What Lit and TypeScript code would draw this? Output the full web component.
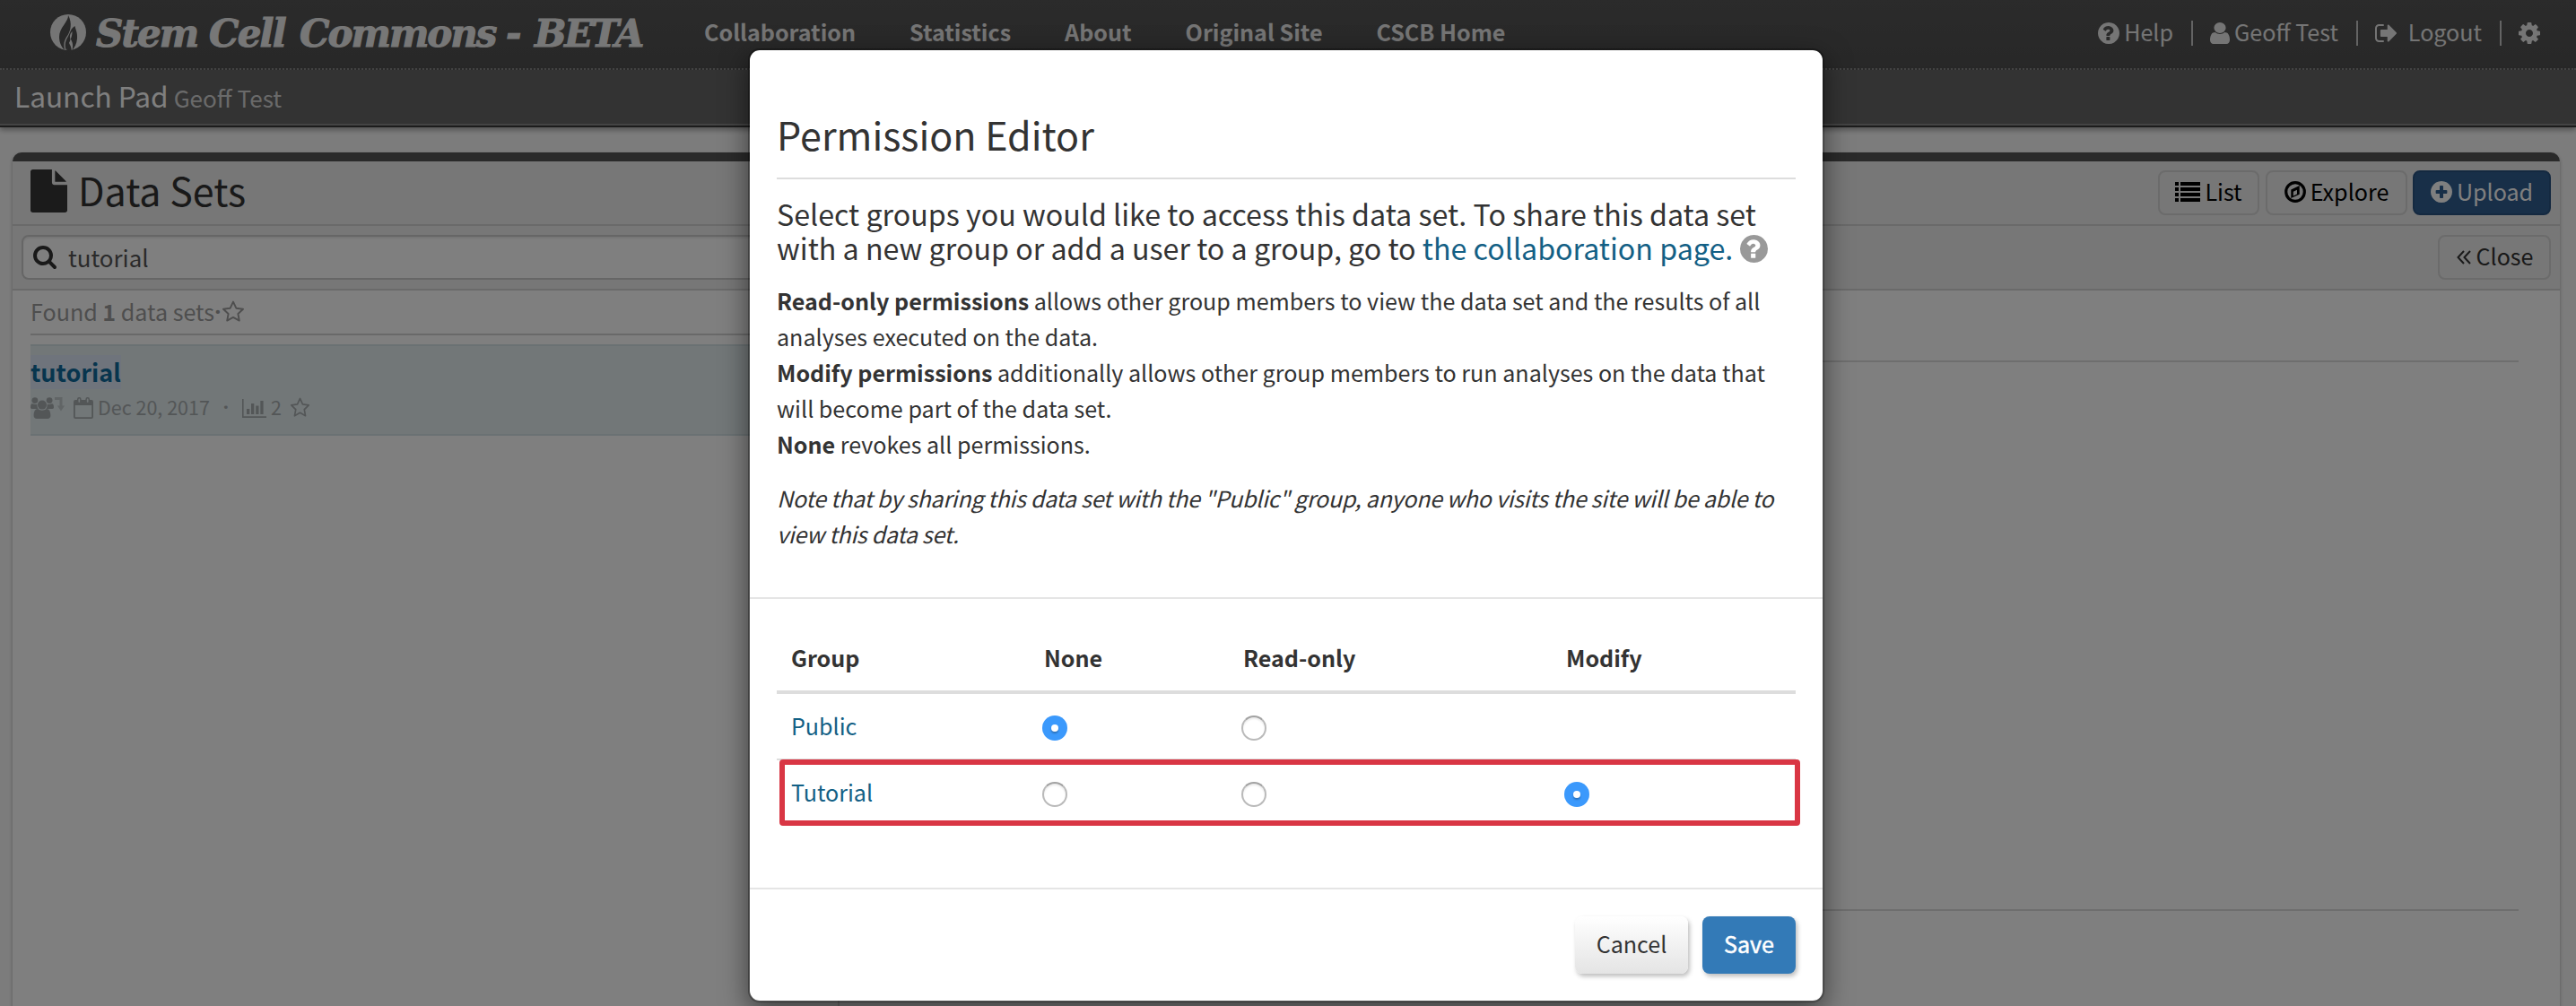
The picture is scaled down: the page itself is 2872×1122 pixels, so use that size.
import { LitElement, html, css, svg } from "lit";
import { customElement, property } from "lit/decorators.js";
import { classMap } from "lit/directives/class-map.js";

/** name -> [viewBox, shapes] */
const ICONS: Record<string, [string, unknown]> = {
  file: [
    "128 0 1536 1792",
    svg`<path d="M1152 512v-472q22 14 36 28l408 408q14 14 28 36h-472zm-128 32q0 40 28 68t68 28h544v1056q0 40-28 68t-68 28h-1344q-40 0-68-28t-28-68v-1600q0-40 28-68t68-28h800v544z"/>`,
  ],
  search: [
    "64 128 1664 1664",
    svg`<path d="M1216 832q0-185-131.500-316.500t-316.500-131.500-316.500 131.500-131.500 316.500 131.500 316.500 316.500 131.500 316.500-131.500 131.500-316.500zm512 832q0 52-38 90t-90 38q-54 0-90-38l-343-342q-179 124-399 124-143 0-273.500-55.500t-225-150-150-225-55.500-273.500 55.500-273.500 150-225 225-150 273.500-55.500 273.500 55.500 225 150 150 225 55.500 273.500q0 220-124 399l343 343q37 37 37 90z"/>`,
  ],
  question: [
    "128 128 1536 1536",
    svg`<path fill-rule="evenodd" transform="translate(-40 0)" d="M1024 1376v-192q0-14-9-23t-23-9h-192q-14 0-23 9t-9 23v192q0 14 9 23t23 9h192q14 0 23-9t9-23zm256-672q0-88-55.500-163t-138.500-116-170-41q-243 0-371 213-15 24 8 42l132 100q7 6 19 6 16 0 25-12 53-68 86-92 34-24 86-24 48 0 85.500 26t37.500 59q0 38-20 61t-68 45q-63 28-115.500 86.500t-52.500 125.500v36q0 14 9 23t23 9h192q14 0 23-9t9-23q0-19 21.500-49.500t54.500-49.500q32-18 49-28.500t46-35 44.500-48 28-60.500 12.500-81z M1704 896q0 209-103 385.500t-279.500 279.500-385.500 103-385.500-103-279.500-279.500-103-385.500 103-385.500 279.500-279.500 385.500-103 385.500 103 279.500 279.500 103 385.500z"/>`,
  ],
  user: [
    "256 128 1280 1536",
    svg`<path d="M1536 1399q0 109-62.500 187t-150.500 78h-854q-88 0-150.500-78t-62.500-187q0-85 8.500-160.500t31.500-152 58.500-131 94-89 134.500-34.500q131 128 313 128t313-128q76 0 134.500 34.500t94 89 58.500 131 31.500 152 8.500 160.500zm-256-887q0 159-112.500 271.500t-271.500 112.500-271.500-112.500-112.500-271.500 112.500-271.500 271.500-112.500 271.500 112.500 112.500 271.500z"/>`,
  ],
  logout: [
    "64 256 1568 1280",
    svg`<path d="M704 1440q0 4 1 20t.5 26.500-3 23.500-10 19.500-20.500 6.500h-320q-119 0-203.500-84.500t-84.500-203.500v-704q0-119 84.500-203.500t203.500-84.500h320q13 0 22.500 9.500t9.500 22.500q0 4 1 20t.5 26.500-3 23.500-10 19.500-20.500 6.500h-320q-66 0-113 47t-47 113v704q0 66 47 113t113 47h312l11.500 1 11.500 3 8 5.500 7 9 2 13.500zm928-544q0 26-19 45l-544 544q-19 19-45 19t-45-19-19-45v-288h-448q-26 0-45-19t-19-45v-384q0-26 19-45t45-19h448v-288q0-26 19-45t45-19 45 19l544 544q19 19 19 45z"/>`,
  ],
  cog: [
    "128 128 1536 1536",
    svg`<path d="M1152 896q0-106-75-181t-181-75-181 75-75 181 75 181 181 75 181-75 75-181zm512-109v222q0 12-8 23t-20 13l-185 28q-19 54-39 91 35 50 107 138 10 12 10 25t-9 23q-27 37-99 108t-94 71q-12 0-26-9l-138-108q-44 23-91 38-16 136-29 186-7 28-36 28h-222q-14 0-24.500-8.500t-11.500-21.500l-28-184q-49-16-90-37l-141 107q-10 9-25 9-14 0-25-11-126-114-165-168-7-10-7-23 0-12 8-23 15-21 51-66.500t54-70.500q-27-50-41-99l-183-27q-13-2-21-12.500t-8-23.500v-222q0-12 8-23t19-13l186-28q14-46 39-92-40-57-107-138-10-12-10-24 0-10 9-23 26-36 98.500-107.500t94.500-71.500q13 0 26 10l138 107q44-23 91-38 16-136 29-186 7-28 36-28h222q14 0 24.500 8.500t11.500 21.500l28 184q49 16 90 37l142-107q9-9 24-9 13 0 25 10 129 119 165 170 7 8 7 22 0 12-8 23-15 21-51 66.500t-54 70.500q26 50 41 98l183 28q13 2 21 12.500t8 23.500z"/>`,
  ],
  plus: [
    "128 128 1536 1536",
    svg`<path fill-rule="evenodd" transform="translate(-40 0)" d="M1344 960v-128q0-26-19-45t-45-19h-216v-256q0-26-19-45t-45-19h-128q-26 0-45 19t-19 45v256h-216q-26 0-45 19t-19 45v128q0 26 19 45t45 19h216v256q0 26 19 45t45 19h128q26 0 45-19t19-45v-256h216q26 0 45-19t19-45z M1704 896q0 209-103 385.500t-279.500 279.500-385.500 103-385.500-103-279.500-279.500-103-385.500 103-385.500 279.500-279.500 385.500-103 385.500 103 279.500 279.500 103 385.500z"/>`,
  ],
  compass: [
    "0 0 24 24",
    svg`<circle cx="12" cy="12" r="10.300" fill="none" stroke="currentColor" stroke-width="3.200"/><path fill-rule="evenodd" d="M16.700 5v9.800L7.300 19V9.600zM14 9.800l-4.200 2v4.600l4.200-2z"/>`,
  ],
  list: [
    "0 0 28 22",
    svg`<path d="M0 0h4v4H0zM6 0h22v4H6zM0 6h4v4H0zM6 6h22v4H6zM0 12h4v4H0zM6 12h22v4H6zM0 18h4v4H0zM6 18h22v4H6z"/>`,
  ],
  angles: [
    "0 0 16 16",
    svg`<path d="M8 1L1.500 8L8 15M15 1L8.500 8L15 15" fill="none" stroke="currentColor" stroke-width="2"/>`,
  ],
  star: [
    "0 0 26 24",
    svg`<path d="M13 1.600L16.300 8.700L24 9.700L18.400 15L19.800 22.600L13 18.900L6.200 22.600L7.600 15L2 9.700L9.700 8.700Z" fill="none" stroke="currentColor" stroke-width="1.900" stroke-linejoin="round"/>`,
  ],
  group: [
    "0 0 26 24",
    svg`<circle cx="4.900" cy="3.600" r="3.400"/><circle cx="21.100" cy="3.600" r="3.400"/><path d="M0 11.500C0 8.500.8 7.200 2 7.200C4.500 8.200 6 8 7.400 7.700C7.200 10 7.800 11.600 8.700 13H3C1 13 0 12.600 0 11.500ZM26 11.500C26 8.500 25.200 7.200 24 7.200C21.500 8.200 20 8 18.600 7.700C18.800 10 18.200 11.600 17.300 13H23C25 13 26 12.600 26 11.500Z"/><circle cx="13" cy="8.600" r="5"/><path d="M8.300 13C10.500 15.200 15.500 15.200 17.700 13C21 13 22.400 16 22.400 20.500C22.400 22.700 21 24 19.200 24H6.800C5 24 3.600 22.700 3.600 20.500C3.600 16 5 13 8.300 13Z"/>`,
  ],
  inherit: [
    "0 0 11 16",
    svg`<path d="M0 0H8.500V9.500H11L7 15.500L3 9.500H5.500V3H0Z"/>`,
  ],
  calendar: [
    "0 0 22 24",
    svg`<path fill-rule="evenodd" d="M2 3H20Q22 3 22 5V22Q22 24 20 24H2Q0 24 0 22V5Q0 3 2 3ZM1.800 9V22.200H20.200V9Z"/><rect x="4.700" y=".8" width="3.200" height="5.700" rx="1.600" class="hole" stroke="currentColor" stroke-width="1.500"/><rect x="14.100" y=".8" width="3.200" height="5.700" rx="1.600" class="hole" stroke="currentColor" stroke-width="1.500"/>`,
  ],
  chart: [
    "0 0 27 21",
    svg`<path d="M0 0H1.600V19.200H27V21H0ZM5 11H8.300V17H5ZM10 5H13.300V17H10ZM15.200 7.500H18.500V17H15.200ZM20.300 2H23.600V17H20.300Z"/>`,
  ],
  flame: [
    "0 0 40 40",
    svg`<circle cx="20" cy="20" r="20"/><g class="flame"><path d="M20 1C20.500 8 10 15 10 25C10 32 13 37 16.200 40C14.500 33 15.500 29 19 24C22.500 19 25 10 20 1Z"/><path d="M27.500 13C28.500 18 30.500 20 30 27C29.500 33 27 37 24.500 40C25.800 34 25 31 22.500 27C22.500 31 19 34 17.500 40C16 34 16.500 30 20 24.500C22.500 20 22.500 16 27.500 13Z"/></g><path d="M24.600 19C21.500 22 21.500 25 22.600 28C24 25 24.500 22 24.600 19Z"/><path class="flame" d="M19.800 29C19.500 33 17.300 35 18.400 40H23.600C24 36 21 33 19.800 29Z"/>`,
  ],
};

@customElement("ui-icon")
export class UiIcon extends LitElement {
  static styles = css`
    :host { display: inline-flex; flex: none; }
    svg { display: block; width: 100%; height: 100%; fill: currentColor; overflow: visible; }
    .hole { fill: #e4eef0; }
    .flame { fill: #525252; }
  `;
  @property() name = "file";
  render() {
    const [box, shapes] = ICONS[this.name];
    return html`<svg viewBox=${box} preserveAspectRatio="none" aria-hidden="true">${shapes}</svg>`;
  }
}

interface GroupRow { name: string; options: (boolean | null)[]; marked: boolean; }

const GROUPS: GroupRow[] = [
  { name: "Public", options: [true, false, null], marked: false },
  { name: "Tutorial", options: [false, false, true], marked: true },
];

@customElement("permission-editor")
export class PermissionEditor extends LitElement {
  static styles = css`
    :host {
      display: flex; flex-direction: column; box-sizing: border-box; width: 1200px; height: 1064px;
      border: 2px solid rgba(0, 0, 0, 0.3); border-radius: 13px; background: #fff; background-clip: padding-box;
      box-shadow: 0 10px 30px rgba(0, 0, 0, 0.5); color: #333; font-size: 25.08px; white-space: nowrap;
    }
    .head { box-sizing: border-box; height: 612px; padding: 30px 30px 0; border-bottom: 2px solid #e5e5e5; }
    .title { margin: 0; height: 112px; border-bottom: 2px solid #ddd; font-size: 43px; font-weight: 400; line-height: 126px; }
    .lead { margin: 19px 0 0; height: 76px; font-size: 32.21px; font-weight: 400; line-height: 38px; }
    .lead ui-icon { width: 31px; height: 31px; color: #999; vertical-align: -3px; margin: -8px 0 -8px 0; }
    .link { color: #136085; text-decoration: none; }
    .text { margin: 20px 0 0; line-height: 40px; }
    .note { margin: 20px 0 0; line-height: 40px; font-style: italic; letter-spacing: -0.31px; }
    .body { box-sizing: border-box; height: 324px; padding: 30px 30px 0; border-bottom: 2px solid #e5e5e5; }
    .row { position: relative; display: grid; grid-template-columns: 280px 222px 360px 274px; box-sizing: border-box; height: 74px; padding-top: 4px; align-items: center; }
    .row + .row { border-top: 2px solid #ddd; }
    .row > * { padding-left: 16px; }
    .row.header { height: 76px; border-bottom: 4px solid #ddd; font-weight: 700; padding: 0 0 2px; }
    .row.header > * + * { padding-left: 18px; }
    .row.header + .row { border-top: 0; height: 72px; }
    .name { padding-bottom: 6px; }
    .radio { box-sizing: border-box; width: 28px; height: 28px; border-radius: 50%; display: flex; align-items: center; justify-content: center;
      border: 2px solid #bababa; border-top-color: #a2a2a2; background: #fff; box-shadow: inset 0 2px 2px #ececec; }
    .radio.on { border: 0; background: #3b99fc; box-shadow: none; }
    .dot { width: 8px; height: 8px; border-radius: 50%; background: #fff; box-shadow: 0 2px 2px rgba(0, 0, 0, 0.25); }
    .mark { position: absolute; left: 3px; top: -1px; width: 1138px; height: 74px; box-sizing: border-box; padding: 0; border: 6px solid #d93644; border-radius: 4px; }
    .foot { display: flex; justify-content: flex-end; gap: 16px; padding: 30px; }
    .btn { box-sizing: border-box; height: 64px; border-radius: 8px; line-height: 61px; text-align: center; box-shadow: 2px 3px 5px rgba(0, 0, 0, 0.26); }
    .cancel { width: 126px; background: linear-gradient(#fff, #e4e4e4); }
    .save { width: 104px; background: #337ab7; color: #fff; -webkit-text-stroke: 0.5px #fff; }
  `;
  private radio(value: boolean | null) {
    if (value === null) return html`<span></span>`;
    return html`<span><span class=${classMap({ radio: true, on: value })}>${value ? html`<span class="dot"></span>` : ""}</span></span>`;
  }
  render() {
    return html`
      <div class="head">
        <h3 class="title">Permission Editor</h3>
        <h4 class="lead">Select groups you would like to access this data set. To share this data set<br />with a new group or add a user to a group, go to <a class="link">the collaboration page.</a> <ui-icon name="question"></ui-icon></h4>
        <p class="text"><b>Read-only permissions</b> allows other group members to view the data set and the results of all<br />analyses executed on the data.<br /><b>Modify permissions</b> additionally allows other group members to run analyses on the data that<br />will become part of the data set.<br /><b>None</b> revokes all permissions.</p>
        <p class="note">Note that by sharing this data set with the "Public" group, anyone who visits the site will be able to<br />view this data set.</p>
      </div>
      <div class="body">
        <div class="row header"><span>Group</span><span>None</span><span>Read-only</span><span>Modify</span></div>
        ${GROUPS.map((g) => html`<div class="row">
          <a class="link name">${g.name}</a>${g.options.map((o) => this.radio(o))}
          ${g.marked ? html`<div class="mark"></div>` : ""}
        </div>`)}
      </div>
      <div class="foot"><div class="btn cancel">Cancel</div><div class="btn save">Save</div></div>
    `;
  }
}

@customElement("app-root")
export class AppRoot extends LitElement {
  static styles = css`
    :host {
      display: block; position: relative; width: 2872px; height: 1122px; overflow: hidden; background: #f9f9f9;
      font-family: "Noto Sans CJK SC", "Source Sans Pro", sans-serif; font-size: 25.08px; color: #333; white-space: nowrap;
    }
    .nav { display: flex; align-items: center; box-sizing: border-box; height: 78px; padding: 0 35px 6px 56px; border-bottom: 2px dotted #8a8a8a;
      background: linear-gradient(#565656, #505050); color: #eaeaea; line-height: 40px; }
    .logo { width: 40px; height: 40px; margin-top: 2px; }
    .brand { display: flex; width: 660px; margin: 5px 18px 0 11px; font: italic 700 42px/40px "DejaVu Serif", serif; color: #efefef; -webkit-text-stroke: 1px #efefef; }
    .stem { width: 126px; letter-spacing: -1.9px; }
    .cell { width: 101px; letter-spacing: -1.8px; }
    .commons { width: 230px; letter-spacing: -2px; }
    .dash { width: 32px; }
    .beta { letter-spacing: -2.2px; }
    .links { display: flex; gap: 60px; flex: 1; font-weight: 700; }
    .tools { display: flex; align-items: center; }
    .bar { width: 2px; height: 28px; margin: 3px 19px 0 20px; background: #c8c8c8; }
    .tools ui-icon { margin-right: 5px; margin-top: 3px; }
    .sub { display: flex; align-items: baseline; box-sizing: border-box; height: 64px; padding-left: 16px; border-bottom: 2px solid #383838;
      background: linear-gradient(#666, #666 60px, #888 60px); color: #fff; font-size: 31.6px; line-height: 57px; box-shadow: 0 3px 6px rgba(0, 0, 0, 0.35); }
    .sub small { font-size: 26.1px; color: #d4d4d4; margin-left: 6px; }
    .panel { display: flex; flex-direction: column; margin: 28px 18px 0 14px; height: 960px; border-top: 10px solid #545454;
      border-radius: 10px 10px 0 0; background: #fff; box-shadow: 0 2px 4px rgba(0, 0, 0, 0.3); }
    .bar1, .bar2 { display: flex; box-sizing: border-box; height: 72px; background: #eee; border-bottom: 2px solid #d4d4d4; }
    .bar1 { padding: 10px 10px 0 20px; gap: 7px; }
    .bar1 .fileicon { width: 41px; height: 48px; color: #363636; margin-top: -1px; }
    .ptitle { flex: 1; margin-left: 5px; font-size: 43px; line-height: 42px; }
    .bar2 { padding: 10px 10px 0 10px; justify-content: space-between; }
    .btn { display: flex; align-items: center; justify-content: center; box-sizing: border-box; height: 50px; padding-bottom: 4px; border: 2px solid #d6d6d6; border-radius: 8px; color: #000; }
    .b-list { width: 113px; }
    .b-explore { width: 158px; }
    .upload { background: #305e90; border-color: #295280; color: #fff; margin-left: -1px; width: 154px; }
    .close { color: #333; width: 126px; }
    .search { display: flex; align-items: center; box-sizing: border-box; width: 900px; height: 50px; padding: 0 0 1px 11px; border: 2px solid #ccc; border-radius: 8px;
      background: #fff; box-shadow: inset 0 2px 2px rgba(0, 0, 0, 0.08); color: #555; font-size: 25.9px; }
    .search ui-icon { width: 26px; height: 26px; color: #333; margin-right: 13px; }
    .cols { display: flex; flex: 1; }
    .left { box-sizing: border-box; width: 922px; padding: 0 0 0 20px; border-right: 2px solid #ddd; }
    .found { display: flex; align-items: center; box-sizing: border-box; height: 50px; padding-bottom: 2px; border-bottom: 2px solid #d2d2d2; color: #9c9c9c; }
    .found span { white-space: pre; }
    .mid { font-family: "Open Sans", sans-serif; font-weight: 700; text-align: center; }
    .found .mid { width: 8px; }
    .found ui-icon { width: 26px; height: 24px; margin-top: -1px; }
    .item { box-sizing: border-box; height: 102px; margin-top: 10px; padding-top: 10px; background: #e4eef0; border: solid #d4e2e6; border-width: 2px 0; }
    .hit { display: inline-block; height: 38px; line-height: 37px; font-size: 27px; font-weight: 700; background: #dee8f8; color: #0e6a9c; }
    .meta { display: flex; align-items: center; height: 26px; margin-top: 8px; font-size: 21.5px; line-height: 26px; color: #a7adaf; }
    .meta .txt { margin-top: -2px; }
    .meta .mid { width: 36px; }
    .right { flex: 1; padding: 78px 46px 0; }
    .line { height: 610px; border: solid #ddd; border-width: 2px 0; }
    .shade { position: absolute; inset: 0; background: rgba(0, 0, 0, 0.5); }
    permission-editor { position: absolute; left: 834px; top: 54px; }
  `;
  render() {
    return html`
      <header class="nav">
        <ui-icon class="logo" name="flame"></ui-icon>
        <div class="brand"><span class="stem">Stem</span> <span class="cell">Cell</span> <span class="commons">Commons</span> <span class="dash">-</span> <span class="beta">BETA</span></div>
        <nav class="links"><a>Collaboration</a><a>Statistics</a><a>About</a><a>Original Site</a><a>CSCB Home</a></nav>
        <div class="tools">
          <ui-icon name="question" style="width:24px;height:24px"></ui-icon>Help<span class="bar"></span>
          <ui-icon name="user" style="width:22px;height:24px"></ui-icon>Geoff Test<span class="bar"></span>
          <ui-icon name="logout" style="width:24px;height:20px;margin-right:13px"></ui-icon>Logout<span class="bar"></span>
          <ui-icon name="cog" style="width:24px;height:24px"></ui-icon>
        </div>
      </header>
      <div class="sub">Launch Pad<small>Geoff Test</small></div>
      <main class="panel">
        <div class="bar1">
          <ui-icon class="fileicon" name="file"></ui-icon>
          <div class="ptitle">Data Sets</div>
          <div class="btn b-list"><ui-icon name="list" style="width:28px;height:22px;margin:2px 5px 0 0"></ui-icon>List</div>
          <div class="btn b-explore"><ui-icon name="compass" style="width:24px;height:24px;margin:2px 5px 0 0"></ui-icon>Explore</div>
          <div class="btn upload"><ui-icon name="plus" style="width:24px;height:24px;margin:2px 5px 0 0"></ui-icon>Upload</div>
        </div>
        <div class="bar2">
          <div class="search"><ui-icon name="search"></ui-icon>tutorial</div>
          <div class="btn close"><ui-icon name="angles" style="width:16px;height:16px;margin:4px 6px 0 1px"></ui-icon>Close</div>
        </div>
        <div class="cols">
          <section class="left">
            <div class="found"><span>Found <b>1</b> data sets</span><span class="mid">·</span><ui-icon name="star"></ui-icon></div>
            <div class="item">
              <div class="hit">tutorial</div>
              <div class="meta">
                <ui-icon name="group" style="width:26px;height:24px"></ui-icon>
                <ui-icon name="inherit" style="width:11px;height:16px;margin:-8px 10px 0 1px;opacity:.55"></ui-icon>
                <ui-icon name="calendar" style="width:22px;height:24px;margin-right:5px"></ui-icon>
                <span class="txt">Dec 20, 2017</span><span class="txt mid">·</span>
                <ui-icon name="chart" style="width:27px;height:21px;margin-right:5px"></ui-icon>
                <span class="txt">2</span>
                <ui-icon name="star" style="width:23px;height:22px;margin:-2px 0 0 9px"></ui-icon>
              </div>
            </div>
          </section>
          <section class="right"><div class="line"></div></section>
        </div>
      </main>
      <div class="shade"></div>
      <permission-editor></permission-editor>
    `;
  }
}
